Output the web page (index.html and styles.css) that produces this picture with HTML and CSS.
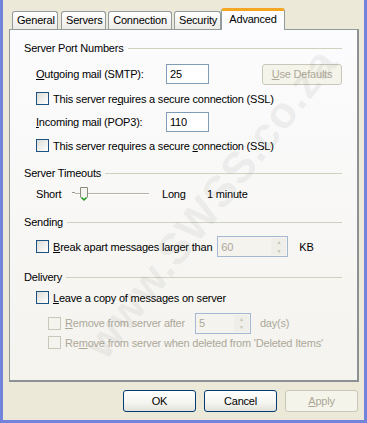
FILE: index.html
```html
<!DOCTYPE html>
<html lang="en">
<head>
    <meta charset="UTF-8">
    <title>Account Properties - Advanced</title>
    <link rel="stylesheet" href="styles.css">
</head>
<body>
    <div class="window">
        <div class="tabs">
            <div class="tab">General</div>
            <div class="tab">Servers</div>
            <div class="tab">Connection</div>
            <div class="tab">Security</div>
            <div class="tab active">Advanced</div>
        </div>

        <div class="panel">
            <div class="group-title t1"><span>Server Port Numbers</span></div>

            <div class="row port-row r-smtp">
                <span class="label"><u>O</u>utgoing mail (SMTP):</span>
                <div class="textbox">25</div>
                <button class="btn disabled defaults"><u>U</u>se Defaults</button>
            </div>
            <label class="check r-ssl1"><span class="box"></span><span>This server re<u>q</u>uires a secure connection (SSL)</span></label>

            <div class="row port-row r-pop">
                <span class="label"><u>I</u>ncoming mail (POP3):</span>
                <div class="textbox">110</div>
            </div>
            <label class="check r-ssl2"><span class="box"></span><span>This server requires a secure <u>c</u>onnection (SSL)</span></label>

            <div class="group-title t2"><span>Server Timeouts</span></div>
            <div class="row r-slider">
                <span class="short">Short</span>
                <div class="slider">
                    <span class="track"></span>
                    <span class="tick"></span>
                    <svg class="thumb" width="8" height="14" viewBox="0 0 8 14">
                        <path d="M0.5 0.5 H7.5 V10 L4 13.5 L0.5 10 Z" fill="#f4f3ee" stroke="#8c8c7c"/>
                        <path d="M1.5 10.5 L4 12.8 L6.5 10.5" fill="none" stroke="#21a121" stroke-width="1.4"/>
                    </svg>
                </div>
                <span class="long">Long</span>
                <span class="minutes">1 minute</span>
            </div>

            <div class="group-title t3"><span>Sending</span></div>
            <div class="row r-break">
                <label class="check"><span class="box"></span><span><u>B</u>reak apart messages larger than</span></label>
                <div class="spin wide disabled">
                    <span class="val">60</span>
                    <span class="arrows">
                        <span class="arr">&#9650;</span>
                        <span class="arr">&#9660;</span>
                    </span>
                </div>
                <span class="unit">KB</span>
            </div>

            <div class="group-title t4"><span>Delivery</span></div>
            <label class="check r-leave"><span class="box"></span><span><u>L</u>eave a copy of messages on server</span></label>
            <div class="row r-after">
                <label class="check disabled"><span class="box"></span><span><u>R</u>emove from server after</span></label>
                <div class="spin narrow disabled">
                    <span class="val">5</span>
                    <span class="arrows">
                        <span class="arr">&#9650;</span>
                        <span class="arr">&#9660;</span>
                    </span>
                </div>
                <span class="unit gray">day(s)</span>
            </div>
            <label class="check disabled r-deleted"><span class="box"></span><span>Re<u>m</u>ove from server when deleted from 'Deleted Items'</span></label>
        </div>

        <div class="buttons">
            <button class="btn">OK</button>
            <button class="btn">Cancel</button>
            <button class="btn disabled"><u>A</u>pply</button>
        </div>

        <div class="watermark">www.SWSS.co.za</div>
    </div>
</body>
</html>
```

FILE: styles.css
```css
body {
    margin: 0;
    font-family: 'Liberation Sans', Arial, sans-serif;
    font-size: 11px;
    letter-spacing: -0.2px;
    color: #000;
    background-color: #ece9d8;
}
.window {
    position: relative;
    width: 361px;
    height: 420px;
    border: 3px solid #7383dc;
    border-top: none;
    background-color: #ece9d8;
    overflow: hidden;
}
u { text-decoration: underline; text-underline-offset: 1px; }

/* tabs */
.tabs {
    display: flex;
    align-items: flex-end;
    height: 29px;
    padding-left: 9px;
    position: relative;
    z-index: 2;
}
.tab {
    height: 17px;
    line-height: 17px;
    padding: 0 4px;
    margin-right: 2px;
    border: 1px solid #919b9c;
    border-bottom: none;
    border-radius: 3px 3px 0 0;
    background: linear-gradient(#ffffff, #ecebe6);
    text-align: center;
}
.tab:nth-child(1) { width: 36px; margin-right: 3px; }
.tab:nth-child(2) { width: 35px; }
.tab:nth-child(3) { width: 54px; }
.tab:nth-child(4) { width: 37px; margin-right: 0; }
.tab.active {
    width: 54px;
    height: 19px;
    line-height: 16px;
    background: #fcfcfe;
    border-top: 3px solid #f5a623;
    position: relative;
    top: 1px;
}

/* panel */
.panel {
    margin: 0 5px 0 6px;
    height: 350px;
    border: 1px solid #919b9c;
    border-right-width: 2px;
    border-bottom-width: 2px;
    border-color: #919b9c #8c9293 #8c9293 #919b9c;
    background: linear-gradient(#fcfcfe, #f4f3ee);
    padding: 0 15px 0 14px;
    position: relative;
}
.group-title {
    display: flex;
    align-items: center;
    height: 14px;
    gap: 4px;
}
.group-title::after {
    content: '';
    flex: 1;
    height: 1px;
    background-color: #d0d0bf;
    margin-top: 1px;
}
.t1 { margin-top: 11px; }
.t2 { margin-top: 14px; }
.t3 { margin-top: 13px; }
.t4 { margin-top: 13px; }

.row {
    display: flex;
    align-items: center;
    padding-left: 12px;
}
.port-row { height: 20px; }
.port-row .label { width: 130px; }
.textbox {
    width: 38px;
    height: 18px;
    line-height: 18px;
    border: 1px solid #7f9db9;
    background-color: #fff;
    padding-left: 3px;
}
.r-smtp { margin-top: 9px; }
.r-ssl1 { margin-top: 8px; }
.r-pop { margin-top: 7px; }
.r-ssl2 { margin-top: 7px; }

.check {
    display: flex;
    align-items: center;
    height: 13px;
    padding-left: 12px;
    white-space: nowrap;
}
.row .check { padding-left: 0; }
.box {
    width: 11px;
    height: 11px;
    border: 1px solid #1c5180;
    background: linear-gradient(135deg, #dcdcd7, #ffffff);
    margin-right: 4px;
    flex: none;
}
.check.disabled { color: #aca899; }
.check.disabled .box {
    border-color: #cac8bb;
    background: #f4f3ee;
}
.gray { color: #aca899; }

/* buttons */
.btn {
    font-family: inherit;
    font-size: 11px;
    letter-spacing: -0.2px;
    color: #000;
    height: 22px;
    width: 73px;
    border: 1px solid #003c74;
    border-radius: 3px;
    background: linear-gradient(#ffffff 0%, #f4f4f0 60%, #e3e2da 100%);
    padding: 0;
}
.btn.disabled {
    color: #aca899;
    border-color: #c9c7ba;
    background: #f5f4ea;
}
.defaults {
    width: 80px;
    height: 21px;
    margin-left: auto;
}

/* slider */
.r-slider {
    margin-top: 6px;
    height: 16px;
}
.short { width: 36px; }
.slider {
    position: relative;
    width: 77px;
    height: 16px;
}
.track {
    position: absolute;
    left: 3px;
    right: 0;
    top: 7px;
    height: 1px;
    background-color: #b5b3a8;
    border-bottom: 1px solid #fff;
}
.tick {
    position: absolute;
    left: 0;
    top: 6px;
    width: 3px;
    height: 1px;
    background-color: #9a998e;
}
.thumb {
    position: absolute;
    left: 8px;
    top: 1px;
}
.long { margin-left: 13px; width: 45px; }

/* spinners */
.r-break {
    margin-top: 7px;
    height: 21px;
}
.spin {
    display: flex;
    height: 19px;
    border: 1px solid #a5b9d5;
    background-color: #f4f3ee;
    color: #aca899;
    margin-left: 5px;
    align-items: center;
}
.spin .val { flex: 1; padding-left: 3px; }
.spin.wide { width: 69px; }
.spin.narrow { width: 54px; }
.arrows {
    display: flex;
    flex-direction: column;
    width: 15px;
    height: 17px;
    margin-right: 1px;
    background-color: #efeee9;
    border-radius: 2px;
}
.arr {
    flex: 1;
    font-size: 5px;
    line-height: 8px;
    text-align: center;
    color: #c7c5b2;
}
.unit { margin-left: 11px; }
.r-leave { margin-top: 7px; }
.r-after {
    margin-top: 9px;
    height: 20px;
    padding-left: 24px;
}
.r-after .spin { margin-left: 10px; }
.r-after .unit { margin-left: 9px; }
.r-deleted { margin-top: 3px; }
.panel > .r-deleted { padding-left: 24px; }

.buttons {
    display: flex;
    justify-content: flex-end;
    gap: 8px;
    padding-right: 6px;
    margin-top: 8px;
}

.watermark {
    position: absolute;
    left: 18px;
    top: 178px;
    font-size: 44px;
    font-weight: bold;
    letter-spacing: 1px;
    color: rgba(120, 120, 120, 0.1);
    transform: rotate(-52deg);
    white-space: nowrap;
    pointer-events: none;
    z-index: 5;
}
```
